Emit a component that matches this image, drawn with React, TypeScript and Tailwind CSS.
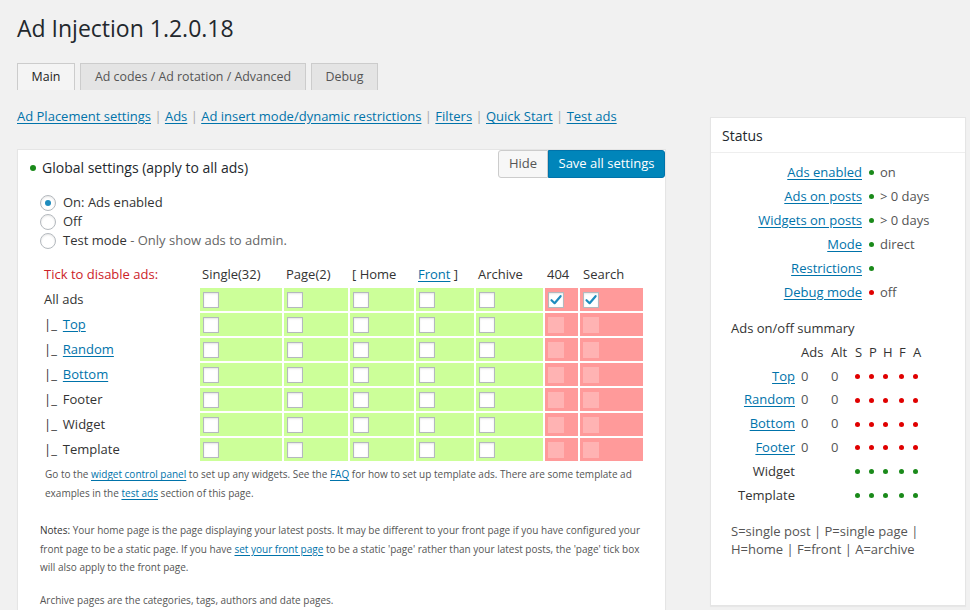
import React from "react";

const GREEN = "bg-[#1a8a1a]";
const RED = "bg-[#e00000]";

function Dot({ c, className = "" }: { c: "g" | "r"; className?: string }) {
  return (
    <span
      className={`inline-block w-[5px] h-[5px] rounded-full ${c === "g" ? GREEN : RED} ${className}`}
    />
  );
}

function Box({ checked = false, disabled = false }: { checked?: boolean; disabled?: boolean }) {
  if (disabled) {
    return <span className="block w-[16px] h-[16px] bg-white/25" />;
  }
  return (
    <span className="relative block w-[16px] h-[16px] bg-white border border-[#b4b9be] shadow-[inset_0_1px_2px_rgba(0,0,0,0.1)]">
      {checked && (
        <svg viewBox="0 0 16 16" className="absolute left-[-1px] top-[-1px] w-[16px] h-[16px]">
          <path d="M3.5 8.2 L6.6 11.2 L12.6 4.2" fill="none" stroke="#1e8cbe" strokeWidth="2.2" strokeLinecap="round" strokeLinejoin="round" />
        </svg>
      )}
    </span>
  );
}

function Radio({ checked = false }: { checked?: boolean }) {
  return (
    <span className="flex items-center justify-center w-[16px] h-[16px] rounded-full bg-white border border-[#b4b9be] shadow-[inset_0_1px_2px_rgba(0,0,0,0.1)]">
      {checked && <span className="block w-[6px] h-[6px] rounded-full bg-[#1e8cbe]" />}
    </span>
  );
}

const A = ({ children }: { children: React.ReactNode }) => (
  <a className="text-[#0073aa] underline underline-offset-[2px] cursor-pointer">{children}</a>
);

const rows: { label: string; link: boolean; prefix: boolean; checkedRed?: boolean }[] = [
  { label: "All ads", link: false, prefix: false, checkedRed: true },
  { label: "Top", link: true, prefix: true },
  { label: "Random", link: true, prefix: true },
  { label: "Bottom", link: true, prefix: true },
  { label: "Footer", link: false, prefix: true },
  { label: "Widget", link: false, prefix: true },
  { label: "Template", link: false, prefix: true },
];

const statusRows: [string, "g" | "r", string][] = [
  ["Ads enabled", "g", "on"],
  ["Ads on posts", "g", "> 0 days"],
  ["Widgets on posts", "g", "> 0 days"],
  ["Mode", "g", "direct"],
  ["Restrictions", "g", ""],
  ["Debug mode", "r", "off"],
];

const summaryRows: [string, boolean][] = [
  ["Top", true],
  ["Random", true],
  ["Bottom", true],
  ["Footer", true],
  ["Widget", false],
  ["Template", false],
];

const dotCols = ["w-[14px]", "w-[14px]", "w-[16px]", "w-[14px]", "w-[14px]"];

export default function App() {
  return (
    <div className="h-[610px] w-[970px] overflow-hidden bg-[#f1f1f1] pl-[17px] font-['Open_Sans',sans-serif] text-[#444]">
      <h1 className="pt-[13px] text-[23px] leading-[31px] font-normal text-[#23282d]">Ad Injection 1.2.0.18</h1>

      <div className="mt-[19px] flex gap-[5px]">
        <div className="h-[27px] w-[58px] flex justify-center border border-b-0 border-[#ccc] bg-[#f4f4f4] text-[12.4px] leading-[25px] text-[#222]">Main</div>
        <div className="h-[27px] w-[226px] flex justify-center border border-b-0 border-[#ccc] bg-[#e4e4e4] text-[12.4px] leading-[25px] text-[#555] whitespace-nowrap">Ad codes / Ad rotation / Advanced</div>
        <div className="h-[27px] w-[67px] flex justify-center border border-b-0 border-[#ccc] bg-[#e4e4e4] text-[12.4px] leading-[25px] text-[#555]">Debug</div>
      </div>

      <div className="flex items-start">
        <div className="w-[649px] shrink-0">
          <div className="mt-[16px] text-[13px] leading-[20px] text-[#aaa] whitespace-nowrap">
            <A>Ad Placement settings</A> | <A>Ads</A> | <A>Ad insert mode/dynamic restrictions</A> | <A>Filters</A> | <A>Quick Start</A> | <A>Test ads</A>
          </div>

          <div className="mt-[23px] h-[480px] bg-white border border-[#e5e5e5] shadow-[0_1px_1px_rgba(0,0,0,0.04)]">
            <div className="flex items-start justify-between">
              <div className="flex h-[35px] items-center pl-[12px] text-[14px] text-[#23282d]">
                <Dot c="g" className="w-[6px] h-[6px]" />
                <span className="ml-[6px]">Global settings (apply to all ads)</span>
              </div>
              <div className="flex">
                <div className="h-[28px] w-[50px] flex items-center justify-center border border-[#ccc] bg-[#f7f7f7] rounded-l-[3px] text-[13px] text-[#555]">Hide</div>
                <div className="h-[28px] w-[117px] flex items-center justify-center border border-[#0073aa] bg-[#0085ba] rounded-r-[3px] text-[13px] text-white">Save all settings</div>
              </div>
            </div>

            <div className="mt-[9px] pl-[22px] text-[13px] text-[#333]">
              <div className="flex h-[18px] items-center"><Radio checked /><span className="ml-[7px]">On: Ads enabled</span></div>
              <div className="flex h-[19px] items-center"><Radio /><span className="ml-[7px]">Off</span></div>
              <div className="flex h-[19px] items-center"><Radio /><span className="ml-[7px]">Test mode <span className="text-[#666]">- Only show ads to admin.</span></span></div>
            </div>

            <div className="mt-[13px] ml-[22px] grid grid-cols-[158px_82px_64px_64px_58px_67px_33px_63px] gap-[2px] text-[13px] text-[#333]">
              <div className="h-[23px] flex items-center pl-[4px] text-[#cc2229]">Tick to disable ads:</div>
              <div className="h-[23px] flex items-center pl-[2px]">Single(32)</div>
              <div className="h-[23px] flex items-center pl-[2px]">Page(2)</div>
              <div className="h-[23px] flex items-center pl-[2px]">[ Home</div>
              <div className="h-[23px] flex items-center pl-[2px] whitespace-nowrap"><A>Front</A>&nbsp;]</div>
              <div className="h-[23px] flex items-center pl-[2px]">Archive</div>
              <div className="h-[23px] flex items-center pl-[2px]">404</div>
              <div className="h-[23px] flex items-center pl-[3px]">Search</div>

              {rows.map((r) => (
                <React.Fragment key={r.label}>
                  <div className="h-[23px] flex items-center pl-[4px] whitespace-nowrap">
                    {r.prefix && <span className="mr-[6px]">|_</span>}
                    {r.link ? <A>{r.label}</A> : r.label}
                  </div>
                  {[0, 1, 2, 3, 4].map((i) => (
                    <div key={i} className="h-[23px] flex items-center pl-[3px] bg-[#ccff99]">
                      <Box />
                    </div>
                  ))}
                  {[0, 1].map((i) => (
                    <div key={"r" + i} className="h-[23px] flex items-center pl-[3px] bg-[#ff9a9a]">
                      {r.checkedRed ? <Box checked /> : <Box disabled />}
                    </div>
                  ))}
                </React.Fragment>
              ))}
            </div>

            <p className="mt-[4px] ml-[27px] text-[10px] leading-[19px] text-[#555] whitespace-nowrap">
              Go to the <A>widget control panel</A> to set up any widgets. See the <A>FAQ</A> for how to set up template ads. There are some template ad
              <br />
              examples in the <A>test ads</A> section of this page.
            </p>

            <p className="mt-[18px] ml-[22px] text-[10px] leading-[18.5px] text-[#555] whitespace-nowrap">
              <span className="text-[#333]">Notes:</span> Your home page is the page displaying your latest posts. It may be different to your front page if you have configured your
              <br />
              front page to be a static page. If you have <A>set your front page</A> to be a static 'page' rather than your latest posts, the 'page' tick box
              <br />
              will also apply to the front page.
            </p>

            <p className="mt-[14px] ml-[22px] text-[10px] leading-[18.5px] text-[#555] whitespace-nowrap">
              Archive pages are the categories, tags, authors and date pages.
            </p>
          </div>
        </div>

        <div className="ml-[44px] mt-[27px] w-[256px] h-[489px] shrink-0 bg-white border border-[#e5e5e5] shadow-[0_1px_1px_rgba(0,0,0,0.04)]">
          <div className="h-[35px] flex items-center pl-[11px] text-[14px] text-[#23282d] border-b border-[#eee]">Status</div>

          <div className="mt-[7px] text-[13px] leading-[24px]">
            {statusRows.map(([label, c, val]) => (
              <div key={label} className="flex items-center">
                <div className="w-[151px] text-right"><A>{label}</A></div>
                <Dot c={c} className="ml-[7px]" />
                <span className="ml-[6px] text-[#555]">{val}</span>
              </div>
            ))}
          </div>

          <div className="mt-[13px] pl-[20px] text-[13px] leading-[23.8px] text-[#333]">Ads on/off summary</div>
          <div className="text-[13px] leading-[23.8px] text-[#333]">
            <div className="flex items-center">
              <div className="w-[84px]" />
              <div className="ml-[6px] w-[30px]">Ads</div>
              <div className="w-[24px]">Alt</div>
              {["S", "P", "H", "F", "A"].map((l, i) => (
                <div key={l} className={dotCols[i]}>{l}</div>
              ))}
            </div>
            {summaryRows.map(([name, link]) => (
              <div key={name} className="flex items-center">
                <div className="w-[84px] text-right">{link ? <A>{name}</A> : name}</div>
                <div className="ml-[6px] w-[30px] text-[#555]">{link ? "0" : ""}</div>
                <div className="w-[24px] text-[#555]">{link ? "0" : ""}</div>
                {dotCols.map((w, i) => (
                  <div key={i} className={`${w} flex items-center`}>
                    <Dot c={link ? "r" : "g"} />
                  </div>
                ))}
              </div>
            ))}
          </div>

          <div className="mt-[15px] pl-[20px] text-[13px] leading-[18px] text-[#555]">
            S=single post | P=single page |
            <br />
            H=home | F=front | A=archive
          </div>
        </div>
      </div>
    </div>
  );
}
